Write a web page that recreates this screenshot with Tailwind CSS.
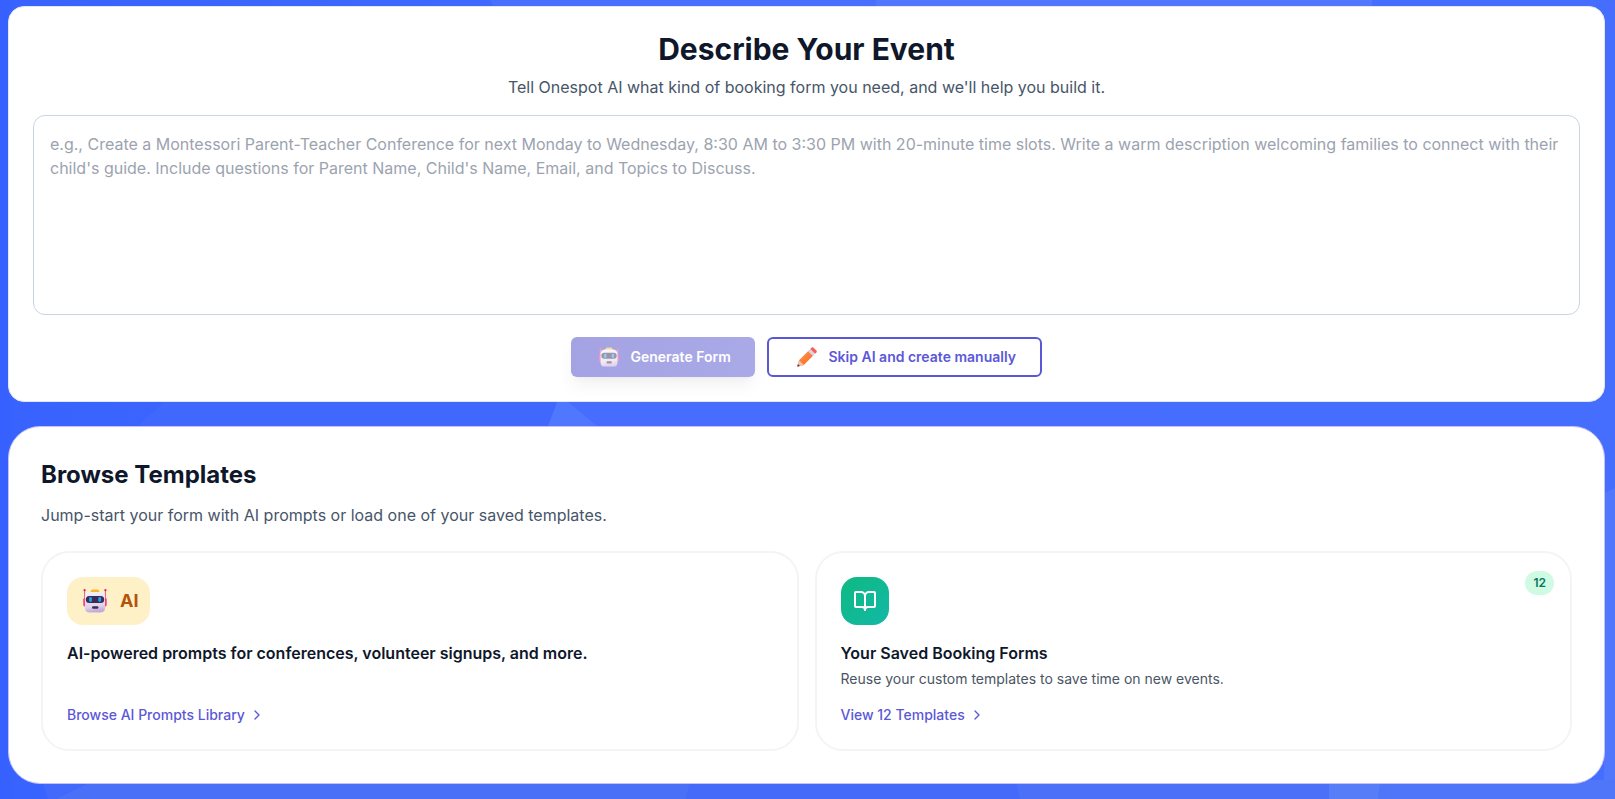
<!DOCTYPE html>
<html lang="en">
<head>
    <meta charset="UTF-8">
    <meta name="viewport" content="width=device-width, initial-scale=1.0">
    <title>Onespot - Create a Booking Form</title>
    <script src="https://cdn.jsdelivr.net/npm/@tailwindcss/browser@4"></script>
</head>
<body class="relative h-screen overflow-hidden bg-[#456dfe] font-['Inter',sans-serif] text-slate-900">

    <!-- Background shapes -->
    <svg class="absolute inset-0" width="1615" height="799" viewBox="0 0 1615 799">
        <defs>
            <linearGradient id="bg" x1="0" y1="0" x2="1" y2="0">
                <stop offset="0" stop-color="#3660ff"/>
                <stop offset="0.01" stop-color="#3963fe"/>
                <stop offset="0.3" stop-color="#3f68fe"/>
                <stop offset="0.4" stop-color="#456dfe"/>
                <stop offset="1" stop-color="#456dfe"/>
            </linearGradient>
        </defs>
        <rect width="1615" height="799" fill="url(#bg)"/>
        <path d="M490 0H876V8H494Z" fill="#486ffe"/>
        <path d="M876 0H1372V8H876Z" fill="#5077fd"/>
        <path d="M138 426L166 400H557L548 426Z" fill="#4168fd"/>
        <path d="M566 400H1160V426H597Z" fill="#466dfe"/>
        <path d="M548 426L558 400H566L597 426Z" fill="#5077ff"/>
        <path d="M1604 493L1615 488V799H1604Z" fill="#5077fc"/>
        <path d="M42 780H95L56 799H48Z" fill="#4269fb"/>
        <path d="M95 780H690L686 799H56Z" fill="#4b70f8"/>
        <path d="M690 780H1016L1020 799H686Z" fill="#456af9"/>
        <path d="M1016 780H1329V799H1020Z" fill="#4c71f8"/>
        <path d="M1329 780H1381L1378 799H1329Z" fill="#587df9"/>
        <path d="M1381 780H1615V799H1378Z" fill="#4f76f9"/>
    </svg>

    <div class="relative flex flex-col gap-6 pt-1.5 pr-2.5 pl-2">

        <!-- Describe your event -->
        <section class="rounded-2xl border border-slate-200 bg-white p-6 text-center">
            <h1 class="text-[30px] leading-9 font-bold">Describe Your Event</h1>
            <p class="mt-2 mb-4 text-base text-[#475569]">Tell Onespot AI what kind of booking form you need, and we'll help you build it.</p>
            <textarea class="block h-[200px] w-full resize-none rounded-xl border border-slate-300 p-4 text-base placeholder:text-[#9ca3af]" placeholder="e.g., Create a Montessori Parent-Teacher Conference for next Monday to Wednesday, 8:30 AM to 3:30 PM with 20-minute time slots. Write a warm description welcoming families to connect with their child's guide. Include questions for Parent Name, Child's Name, Email, and Topics to Discuss."></textarea>

            <div class="mt-[22px] flex justify-center gap-3">
                <button class="flex h-10 w-[184px] items-center rounded-md bg-linear-to-r from-[#4b48c7] to-[#5856d3] pl-7 text-sm font-semibold text-white opacity-50 shadow-lg" disabled>
                    <svg class="mr-[11.5px] h-5 w-5 shrink-0" viewBox="0 0 24 24">
                        <use href="#robot"/>
                    </svg>
                    Generate Form
                </button>
                <button class="flex h-10 w-[275px] items-center rounded-md border-2 border-[#5b58d8] bg-white pl-7 text-sm font-semibold text-[#5b58d8]">
                    <svg class="mr-[11.5px] h-5 w-5 shrink-0" viewBox="0 0 20 20">
                        <defs>
                            <linearGradient id="pencil" x1="0" y1="0" x2="1" y2="1">
                                <stop offset="0" stop-color="#ff9a4a"/>
                                <stop offset="1" stop-color="#f4662f"/>
                            </linearGradient>
                        </defs>
                        <path d="M2 13.2L11.8 3.4L16.6 8.2L6.8 18L.8 19.6Q.2 19.8.4 19.2Z" fill="url(#pencil)"/>
                        <path d="M2 13.2L6.8 18L.8 19.6Q.2 19.8.4 19.2Z" fill="#f3c3a5"/>
                        <path d="M.9 17L3 19L.8 19.6Q.2 19.8.4 19.2Z" fill="#4b3545"/>
                        <path d="M11 4.2L13.3 1.9L18.1 6.7L15.8 9Z" fill="#d5d3e6"/>
                        <path d="M13.3 1.9L14.6.6Q15.5-.2 16.4.6L19.4 3.6Q20.2 4.5 19.4 5.4L18.1 6.7Z" fill="#fb5e59"/>
                    </svg>
                    Skip AI and create manually
                </button>
            </div>
        </section>

        <!-- Browse templates -->
        <section class="rounded-[32px] border border-[#c3c0fb] bg-white p-8">
            <h2 class="text-2xl font-bold">Browse Templates</h2>
            <p class="mt-3 mb-6 text-base text-[#475569]">Jump-start your form with AI prompts or load one of your saved templates.</p>

            <div class="grid grid-cols-2 gap-4">
                <div class="flex h-[200px] flex-col items-start rounded-[28px] border-2 border-gray-100 p-6">
                    <div class="flex h-12 w-[83px] items-center rounded-2xl bg-[#fef1c8] pl-4 text-lg font-bold text-[#b45309]">
                        <svg class="mr-[13px] h-6 w-6 shrink-0" viewBox="0 0 24 24">
                            <defs>
                                <linearGradient id="face" x1="0" y1="0" x2="0.15" y2="1">
                                    <stop offset="0" stop-color="#f6f2f8"/>
                                    <stop offset="0.75" stop-color="#dfd4ea"/>
                                    <stop offset="1" stop-color="#c3aadb"/>
                                </linearGradient>
                            </defs>
                            <g id="robot">
                                <path d="M1.6 1.5V12M22.4 1.5V12" stroke="#f0618c" stroke-width="1.1"/>
                                <circle cx="1.6" cy="1.2" r="1.1" fill="#e3204f"/>
                                <circle cx="22.4" cy="1.2" r="1.1" fill="#e3204f"/>
                                <rect x=".3" y="9" width="3" height="8.5" rx="1.4" fill="#f8357b"/>
                                <rect x="20.7" y="9" width="3" height="8.5" rx="1.4" fill="#f8357b"/>
                                <path d="M7.6 3.4Q7.6.6 10 .6H14.2Q16.4.6 16.4 3.4V4H7.6Z" fill="#f9b52b"/>
                                <path d="M1.9 8.5Q1.9 3 7.6 3H16.4Q22.1 3 22.1 8.5V18.5Q22.1 23.5 17.2 23.5H6.8Q1.9 23.5 1.9 18.5Z" fill="url(#face)"/>
                                <rect x="2.8" y="6.9" width="18.4" height="7.1" rx="3.5" fill="#3b2b55"/>
                                <rect x="6.1" y="8" width="2.8" height="5" rx="1.4" fill="#18a7f2"/>
                                <rect x="15.3" y="8" width="2.8" height="5" rx="1.4" fill="#18a7f2"/>
                                <rect x="9" y="17.2" width="6.4" height="2.6" rx="1.2" fill="#3b2b55"/>
                            </g>
                        </svg>
                        AI
                    </div>
                    <h3 class="mt-4 text-base font-semibold">AI-powered prompts for conferences, volunteer signups, and more.</h3>
                    <a class="mt-auto flex items-center gap-1 text-sm font-medium text-[#5b58d8]" href="#">
                        Browse AI Prompts Library
                        <svg class="h-4 w-4" viewBox="0 0 24 24" fill="none" stroke="currentColor" stroke-width="2" stroke-linecap="round" stroke-linejoin="round"><path d="m9 18 6-6-6-6"/></svg>
                    </a>
                </div>

                <div class="relative flex h-[200px] flex-col items-start rounded-[28px] border-2 border-gray-100 p-6">
                    <span class="absolute top-[18px] right-4 rounded-full bg-[#d1fae5] px-2 py-1 text-xs font-semibold text-[#047857]">12</span>
                    <div class="flex h-12 w-12 items-center justify-center rounded-2xl bg-linear-to-br from-[#10b981] to-[#14b8a6] text-white">
                        <svg class="h-6 w-6" viewBox="0 0 24 24" fill="none" stroke="currentColor" stroke-width="2" stroke-linecap="round" stroke-linejoin="round"><path d="M12 7v14"/><path d="M3 18a1 1 0 0 1-1-1V4a1 1 0 0 1 1-1h5a4 4 0 0 1 4 4 4 4 0 0 1 4-4h5a1 1 0 0 1 1 1v13a1 1 0 0 1-1 1h-6a3 3 0 0 0-3 3 3 3 0 0 0-3-3z"/></svg>
                    </div>
                    <h3 class="mt-4 text-base font-semibold">Your Saved Booking Forms</h3>
                    <p class="mt-1 text-sm text-gray-600">Reuse your custom templates to save time on new events.</p>
                    <a class="mt-auto flex items-center gap-1 text-sm font-medium text-[#5b58d8]" href="#">
                        View 12 Templates
                        <svg class="h-4 w-4" viewBox="0 0 24 24" fill="none" stroke="currentColor" stroke-width="2" stroke-linecap="round" stroke-linejoin="round"><path d="m9 18 6-6-6-6"/></svg>
                    </a>
                </div>
            </div>
        </section>
    </div>

</body>
</html>
